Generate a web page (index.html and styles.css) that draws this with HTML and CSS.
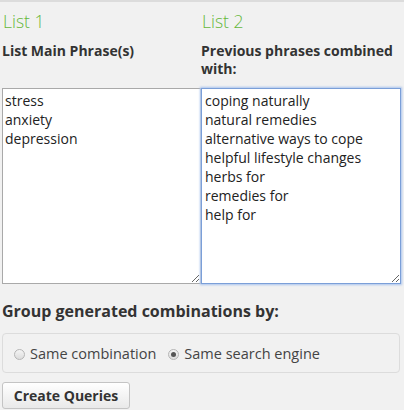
FILE: index.html
```html
<!DOCTYPE html>
<html>
<head>
<meta charset="utf-8">
<link rel="stylesheet" href="styles.css">
</head>
<body>
<div class="page">
  <div class="lists">
    <div class="col">
      <div class="list-title">List 1</div>
      <div class="list-label">List Main Phrase(s)</div>
      <textarea class="box">stress
anxiety
depression</textarea>
    </div>
    <div class="col">
      <div class="list-title">List 2</div>
      <div class="list-label">Previous phrases combined with:</div>
      <textarea class="box focused">coping naturally
natural remedies
alternative ways to cope
helpful lifestyle changes
herbs for
remedies for
help for</textarea>
    </div>
  </div>
  <div class="group-title">Group generated combinations by:</div>
  <div class="options">
    <label class="opt"><span class="radio"></span>Same combination</label>
    <label class="opt"><span class="radio checked"></span>Same search engine</label>
  </div>
  <button class="btn">Create Queries</button>
</div>
</body>
</html>
```
FILE: styles.css
```css
html, body {
  margin: 0;
  padding: 0;
  background: #f1f1f1;
}
body {
  font-family: "Open Sans", "Liberation Sans", sans-serif;
  color: #333;
  border-top: 2px solid #dcdcdc;
}
.page {
  padding: 0 2px;
}
.lists {
  display: grid;
  grid-template-columns: 199px 200px;
}
.col {
  display: flex;
  flex-direction: column;
}
.list-title {
  font-size: 17.5px;
  font-weight: 300;
  color: #66b83b;
  line-height: 22px;
  margin-top: 8px;
  padding-left: 1px;
}
.list-label {
  font-size: 14px;
  font-weight: 700;
  line-height: 18px;
  margin-top: 10px;
  height: 36px;
}
.box {
  box-sizing: border-box;
  width: 100%;
  height: 196px;
  margin: 10px 0 0 0;
  padding: 2px 2px;
  border: 1px solid #a9a9a9;
  border-right-color: #c8c8c8;
  background: #fff;
  font-family: "Open Sans", "Liberation Sans", sans-serif;
  font-size: 14px;
  line-height: 19px;
  color: #222;
  resize: both;
  outline: none;
}
.focused {
  border: 1px solid #7b9fd8;
  box-shadow: 0 0 2px 1px #a9c4ee;
  padding-left: 3px;
}
.group-title {
  font-size: 16px;
  font-weight: 700;
  line-height: 20px;
  margin-top: 17px;
}
.options {
  margin-top: 12px;
  border: 1px solid #dcdcdc;
  border-radius: 4px;
  height: 40px;
  box-sizing: border-box;
  display: flex;
  align-items: center;
  gap: 12px;
  padding: 0 0 0 11px;
  width: 398px;
}
.opt {
  display: flex;
  align-items: center;
  gap: 5px;
  font-size: 14.5px;
  color: #444;
}
.radio {
  width: 11px;
  height: 11px;
  border-radius: 50%;
  border: 1px solid #b5b5b5;
  background: linear-gradient(#f4f4f4, #dcdcdc);
  box-sizing: border-box;
  position: relative;
  margin-top: 2px;
}
.radio.checked::after {
  content: "";
  position: absolute;
  left: 2px;
  top: 2px;
  width: 5px;
  height: 5px;
  border-radius: 50%;
  background: #555;
}
.btn {
  display: block;
  margin-top: 9px;
  font-family: "Open Sans", "Liberation Sans", sans-serif;
  font-size: 14px;
  font-weight: 700;
  color: #333;
  background: linear-gradient(#ffffff, #e9e9e9);
  border: 1px solid #c4c4c4;
  border-radius: 3px;
  padding: 0;
  height: 27px;
  width: 128px;
}
```
